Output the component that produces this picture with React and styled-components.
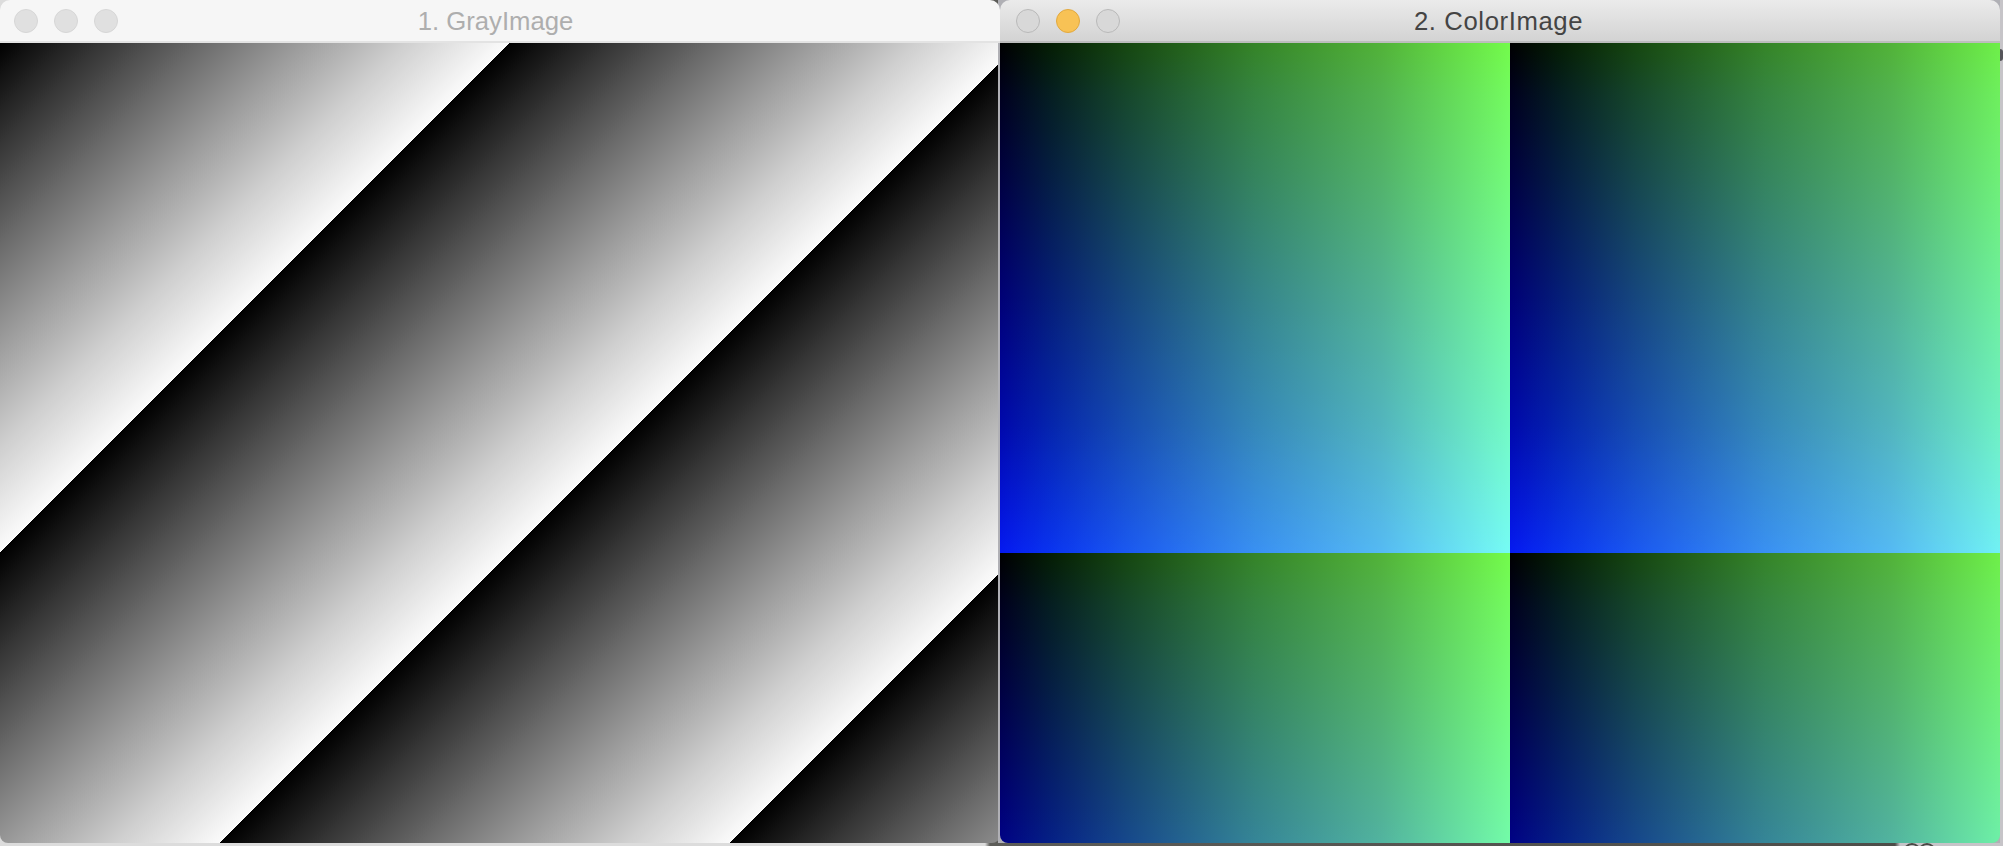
import React from "react";
import styled, { createGlobalStyle } from "styled-components";

const GlobalStyle = createGlobalStyle`
  html, body {
    margin: 0;
    padding: 0;
    background: #d4d2d8;
  }
  #root {
    width: 2003px;
    height: 846px;
    overflow: hidden;
  }
`;

// desktop peeking out under the two windows
const Desktop = styled.div`
  position: relative;
  width: 2003px;
  height: 846px;
  display: flex;
  align-items: flex-start;
  background:
    linear-gradient(to right, #dcdcdc 0, #dcdcdc 985px, #5c5c58 990px, #4d4d49 1895px, #c6c4c8 1900px, #c6c4c8 100%);
`;

const Window = styled.section`
  width: ${(p) => p.$width}px;
  height: 843px;
  flex: none;
  display: flex;
  flex-direction: column;
  overflow: hidden;
  border-radius: 10px 10px 8px 8px;
`;

const ActiveFrame = styled.div`
  flex: none;
  padding-left: 2px;
  background: #b0b0b5;
  margin-left: -2px;
`;

const TitleBar = styled.header`
  height: 41px;
  flex: none;
  position: relative;
  display: flex;
  align-items: center;
  justify-content: center;
  padding-right: ${(p) => (p.$active ? 3 : 9)}px;
  background: ${(p) =>
    p.$active ? "linear-gradient(to bottom, #ebebeb, #d3d3d3)" : "#f6f6f6"};
  border-bottom: 2px solid ${(p) => (p.$active ? "#bdbdbd" : "#e3e3e3")};
`;

const Lights = styled.div`
  position: absolute;
  left: ${(p) => (p.$active ? 16 : 14)}px;
  top: 9px;
  display: flex;
  gap: 16px;
`;

const Light = styled.span`
  width: 24px;
  height: 24px;
  box-sizing: border-box;
  border-radius: 50%;
  background: ${(p) => p.$fill};
  border: 1px solid ${(p) => p.$line};
`;

const Title = styled.h1`
  margin: 2px 0 0;
  font-family: "Liberation Sans", Arial, sans-serif;
  font-weight: normal;
  font-size: 25.7px;
  line-height: 41px;
  letter-spacing: ${(p) => (p.$active ? 0.6 : 0)}px;
  color: ${(p) => (p.$active ? "#444444" : "#aeaeae")};
`;

const GrayImage = styled.div`
  flex: 1;
  background: repeating-linear-gradient(
    135deg,
    #000 0,
    #363636 72.1px,
    #6b6b6b 144.2px,
    #9e9e9e 216.4px,
    #d0d0d0 288.5px,
    #fbfbfb 360.62px
  );
`;

const ColorImage = styled.div`
  flex: 1;
  background-color: #000;
  background-image:
    linear-gradient(to right, #000000, #051e03 10%, #16470f 25%, #358427 50%, #52b338 75%, #73fb4b),
    linear-gradient(to bottom, #000000, #00001e 10%, #00003e 25%, #000076 50%, #0008ac 75%, #0519f0);
  background-size: 510px 510px;
  background-repeat: repeat;
  background-blend-mode: screen;
`;

const Rings = styled.svg`
  position: absolute;
  left: 1900px;
  top: 843px;
`;

const Nub = styled.span`
  position: absolute;
  left: 2000px;
  top: 49px;
  width: 3px;
  height: 12px;
  border-radius: 0 6px 6px 0;
  background: #55555a;
`;

const inactive = { fill: "#e0e0e0", line: "#d6d6d6" };
const idle = { fill: "#d8d8d8", line: "#b9b9b9" };
const yellow = { fill: "#f8c255", line: "#e2a93f" };

const App = () => (
  <>
    <GlobalStyle />
    <Desktop>
      <Window $width={1000}>
        <TitleBar>
          <Lights>
            <Light $fill={inactive.fill} $line={inactive.line} />
            <Light $fill={inactive.fill} $line={inactive.line} />
            <Light $fill={inactive.fill} $line={inactive.line} />
          </Lights>
          <Title>1. GrayImage</Title>
        </TitleBar>
        <GrayImage />
      </Window>
      <ActiveFrame>
        <Window $width={1000}>
          <TitleBar $active>
            <Lights $active>
              <Light $fill={idle.fill} $line={idle.line} />
              <Light $fill={yellow.fill} $line={yellow.line} />
              <Light $fill={idle.fill} $line={idle.line} />
            </Lights>
            <Title $active>2. ColorImage</Title>
          </TitleBar>
          <ColorImage />
        </Window>
      </ActiveFrame>
      <Nub />
      <Rings width="40" height="3" viewBox="0 0 40 3">
        <circle cx="12" cy="9" r="8" fill="none" stroke="#4a4a46" strokeWidth="2" />
        <circle cx="27" cy="9" r="8" fill="none" stroke="#4a4a46" strokeWidth="2" />
      </Rings>
    </Desktop>
  </>
);

export default App;
